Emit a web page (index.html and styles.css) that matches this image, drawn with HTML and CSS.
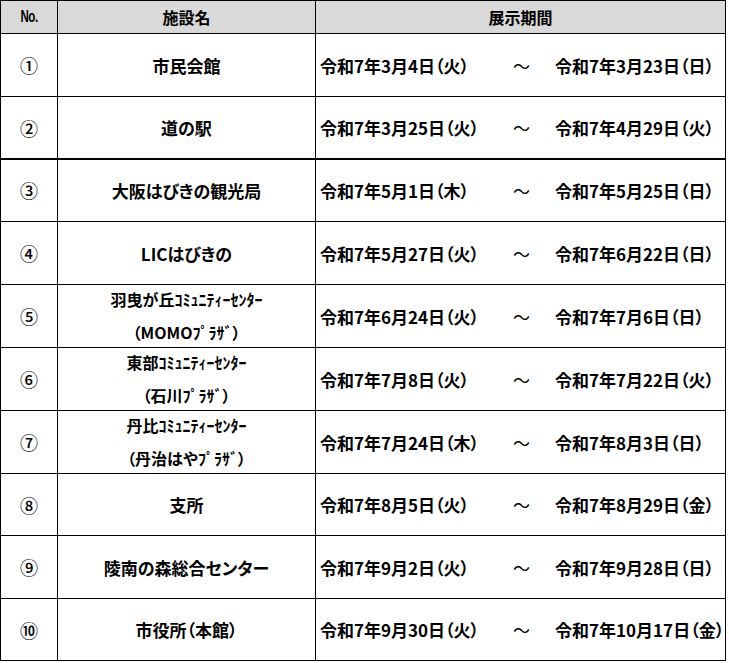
FILE: index.html
```html
<!DOCTYPE html>
<html lang="ja">
<head>
<meta charset="utf-8">
<title>展示期間</title>
<link rel="stylesheet" href="styles.css">
</head>
<body>
<div class="schedule">
  <div class="cell head no"><span class="no-label">No.</span></div>
  <div class="cell head">施設名</div>
  <div class="cell head">展示期間</div>

  <div class="cell num">①</div>
  <div class="cell name">市民会館</div>
  <div class="cell period"><span class="from">令和7年3月4日（火）</span><span class="tilde">～</span><span class="to">令和7年3月23日（日）</span></div>

  <div class="cell num">②</div>
  <div class="cell name">道の駅</div>
  <div class="cell period"><span class="from">令和7年3月25日（火）</span><span class="tilde">～</span><span class="to">令和7年4月29日（火）</span></div>

  <div class="cell num thick">③</div>
  <div class="cell name thick">大阪はびきの観光局</div>
  <div class="cell period thick"><span class="from">令和7年5月1日（木）</span><span class="tilde">～</span><span class="to">令和7年5月25日（日）</span></div>

  <div class="cell num">④</div>
  <div class="cell name">LICはびきの</div>
  <div class="cell period"><span class="from">令和7年5月27日（火）</span><span class="tilde">～</span><span class="to">令和7年6月22日（日）</span></div>

  <div class="cell num">⑤</div>
  <div class="cell name two">羽曳が丘ｺﾐｭﾆﾃｨｰｾﾝﾀｰ<br>（MOMOﾌﾟﾗｻﾞ）</div>
  <div class="cell period"><span class="from">令和7年6月24日（火）</span><span class="tilde">～</span><span class="to">令和7年7月6日（日）</span></div>

  <div class="cell num">⑥</div>
  <div class="cell name two">東部ｺﾐｭﾆﾃｨｰｾﾝﾀｰ<br>（石川ﾌﾟﾗｻﾞ）</div>
  <div class="cell period"><span class="from">令和7年7月8日（火）</span><span class="tilde">～</span><span class="to">令和7年7月22日（火）</span></div>

  <div class="cell num">⑦</div>
  <div class="cell name two">丹比ｺﾐｭﾆﾃｨｰｾﾝﾀｰ<br>（丹治はやﾌﾟﾗｻﾞ）</div>
  <div class="cell period"><span class="from">令和7年7月24日（木）</span><span class="tilde">～</span><span class="to">令和7年8月3日（日）</span></div>

  <div class="cell num">⑧</div>
  <div class="cell name">支所</div>
  <div class="cell period"><span class="from">令和7年8月5日（火）</span><span class="tilde">～</span><span class="to">令和7年8月29日（金）</span></div>

  <div class="cell num">⑨</div>
  <div class="cell name">陵南の森総合センター</div>
  <div class="cell period"><span class="from">令和7年9月2日（火）</span><span class="tilde">～</span><span class="to">令和7年9月28日（日）</span></div>

  <div class="cell num">⑩</div>
  <div class="cell name">市役所（本館）</div>
  <div class="cell period"><span class="from">令和7年9月30日（火）</span><span class="tilde">～</span><span class="to">令和7年10月17日（金）</span></div>
</div>
</body>
</html>
```

FILE: styles.css
```css
html, body {
  margin: 0;
  padding: 0;
  background: #ffffff;
}

body {
  font-family: "Noto Sans CJK JP", "Noto Sans", sans-serif;
  color: #000000;
}

.schedule {
  display: grid;
  width: 724px;
  grid-template-columns: 56px 257px 409px;
  grid-template-rows: 32px 62px 61px 62px 62px 62px 62px 62px 61px 62px 61px;
  gap: 1px;
  padding: 1px;
  background: #000000;
}

.cell {
  background: #ffffff;
  display: flex;
  align-items: center;
  justify-content: center;
  font-size: 17px;
  font-weight: 700;
  line-height: 1;
  white-space: nowrap;
  overflow: visible;
  font-feature-settings: "palt";
}

.head {
  background: #d9d9d9;
  font-size: 16px;
  font-feature-settings: normal;
}

.head.no {
  font-family: "Liberation Sans Narrow", "Liberation Sans", sans-serif;
  font-size: 16px;
}

.no-label {
  display: inline-block;
  transform: scaleX(0.72);
  letter-spacing: -0.5px;
}

.num {
  font-weight: 500;
  font-size: 18px;
  font-feature-settings: normal;
}

.name {
  text-align: center;
}

.name.two {
  line-height: 33px;
  font-size: 16px;
}

.thick {
  box-shadow: inset 0 1px 0 #000000;
}

.period {
  justify-content: flex-start;
  padding-left: 4px;
}

.from {
  flex: none;
  width: 193px;
}

.tilde {
  flex: none;
  width: 17px;
  margin-right: 25px;
  text-align: center;
  font-weight: 400;
  font-feature-settings: normal;
}

.to {
  flex: none;
}
```
